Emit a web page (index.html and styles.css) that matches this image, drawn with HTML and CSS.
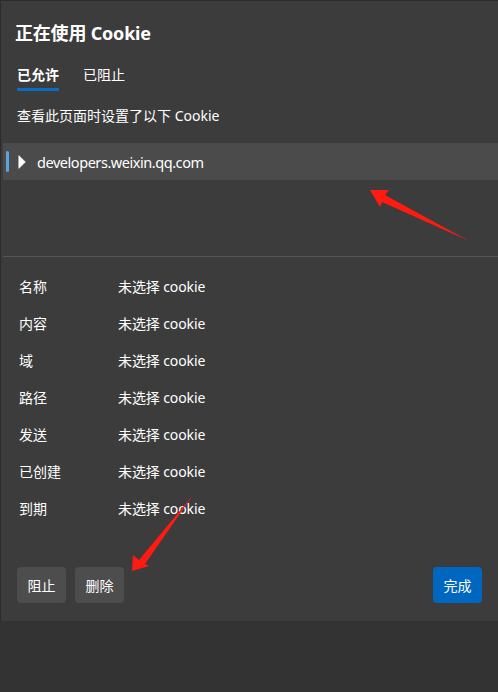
FILE: index.html
```html
<!DOCTYPE html>
<html lang="zh-CN">
<head>
<meta charset="utf-8">
<title>正在使用 Cookie</title>
<link rel="stylesheet" href="styles.css">
</head>
<body>
<div class="dialog">
  <h1 class="title">正在使用 Cookie</h1>
  <div class="tabs">
    <span class="tab active">已允许</span>
    <span class="tab">已阻止</span>
  </div>
  <p class="desc">查看此页面时设置了以下 Cookie</p>
  <div class="tree">
    <div class="tree-item selected">
      <span class="focus-bar"></span>
      <svg class="caret" width="8" height="14" viewBox="0 0 8 14"><path d="M0.8 0.6 L7.4 7 L0.8 13.4 Z" fill="#fff" stroke="#fff" stroke-width="0.6" stroke-linejoin="round"/></svg>
      <span class="host">developers.weixin.qq.com</span>
    </div>
  </div>
  <div class="details">
    <div class="row"><span class="label">名称</span><span class="value">未选择 cookie</span></div>
    <div class="row"><span class="label">内容</span><span class="value">未选择 cookie</span></div>
    <div class="row"><span class="label">域</span><span class="value">未选择 cookie</span></div>
    <div class="row"><span class="label">路径</span><span class="value">未选择 cookie</span></div>
    <div class="row"><span class="label">发送</span><span class="value">未选择 cookie</span></div>
    <div class="row"><span class="label">已创建</span><span class="value">未选择 cookie</span></div>
    <div class="row"><span class="label">到期</span><span class="value">未选择 cookie</span></div>
  </div>
  <div class="actions">
    <button class="btn">阻止</button>
    <button class="btn">删除</button>
    <span class="spacer"></span>
    <button class="btn primary">完成</button>
  </div>
</div>
<svg class="annotations" width="498" height="692" viewBox="0 0 498 692">
  <polygon points="370,190 389,190 385,195 469,241 382,202 380,207" fill="#ff1a12"/>
  <polygon points="132,571 133,555 139,560 193,495 145,564 149,566" fill="#ff1a12"/>
</svg>
</body>
</html>
```
FILE: styles.css
```css
html, body {
  margin: 0;
  padding: 0;
}
body {
  background: #333333;
  width: 498px;
  height: 692px;
  position: relative;
  overflow: hidden;
  font-family: "Noto Sans", "Noto Sans CJK SC", sans-serif;
  color: #ffffff;
}
.dialog {
  height: 620px;
  background: #3c3c3c;
  border-top: 1px solid #2c2c2c;
  border-left: 1px solid #2c2c2c;
  padding-left: 2px;
  display: flex;
  flex-direction: column;
}
.title {
  margin: 0;
  padding: 20px 0 0 12px;
  font-size: 18px;
  font-weight: 700;
  line-height: 24px;
  letter-spacing: -0.2px;
}
.tabs {
  display: flex;
  gap: 24px;
  padding: 20px 0 0 14px;
}
.tab {
  font-size: 14px;
  line-height: 20px;
  padding-bottom: 3px;
  border-bottom: 3px solid transparent;
}
.tab.active {
  font-weight: 600;
  border-bottom-color: #0a6cc2;
  border-radius: 0 0 1px 1px;
}
.desc {
  margin: 0;
  padding: 15px 0 0 14px;
  font-size: 14px;
  line-height: 20px;
}
.tree {
  margin-top: 17px;
  height: 113px;
  border-bottom: 1px solid #555555;
}
.tree-item {
  height: 37px;
  display: flex;
  align-items: center;
  background: #4b4b4b;
}
.focus-bar {
  width: 3px;
  height: 21px;
  margin-left: 3px;
  background: #5da3e0;
  border-radius: 2px;
}
.caret {
  margin-left: 9px;
}
.host {
  margin-left: 11px;
  font-size: 14.5px;
  letter-spacing: -0.45px;
}
.details {
  padding-top: 10px;
  display: flex;
  flex-direction: column;
}
.row {
  height: 37px;
  display: flex;
  align-items: center;
  font-size: 14px;
}
.label {
  width: 99px;
  padding-left: 16px;
}
.value {
  letter-spacing: -0.1px;
}
.actions {
  margin-top: auto;
  margin-bottom: 18px;
  display: flex;
  gap: 9px;
  padding: 0 16px 0 14px;
}
.spacer {
  flex: 1;
}
.btn {
  width: 49px;
  height: 36px;
  border: none;
  border-radius: 4px;
  background: #4d4d4d;
  color: #ffffff;
  font-family: "Noto Sans", "Noto Sans CJK SC", sans-serif;
  font-size: 14px;
  padding: 0;
}
.btn.primary {
  background: #0067c0;
}
.annotations {
  position: absolute;
  left: 0;
  top: 0;
  pointer-events: none;
}
```
